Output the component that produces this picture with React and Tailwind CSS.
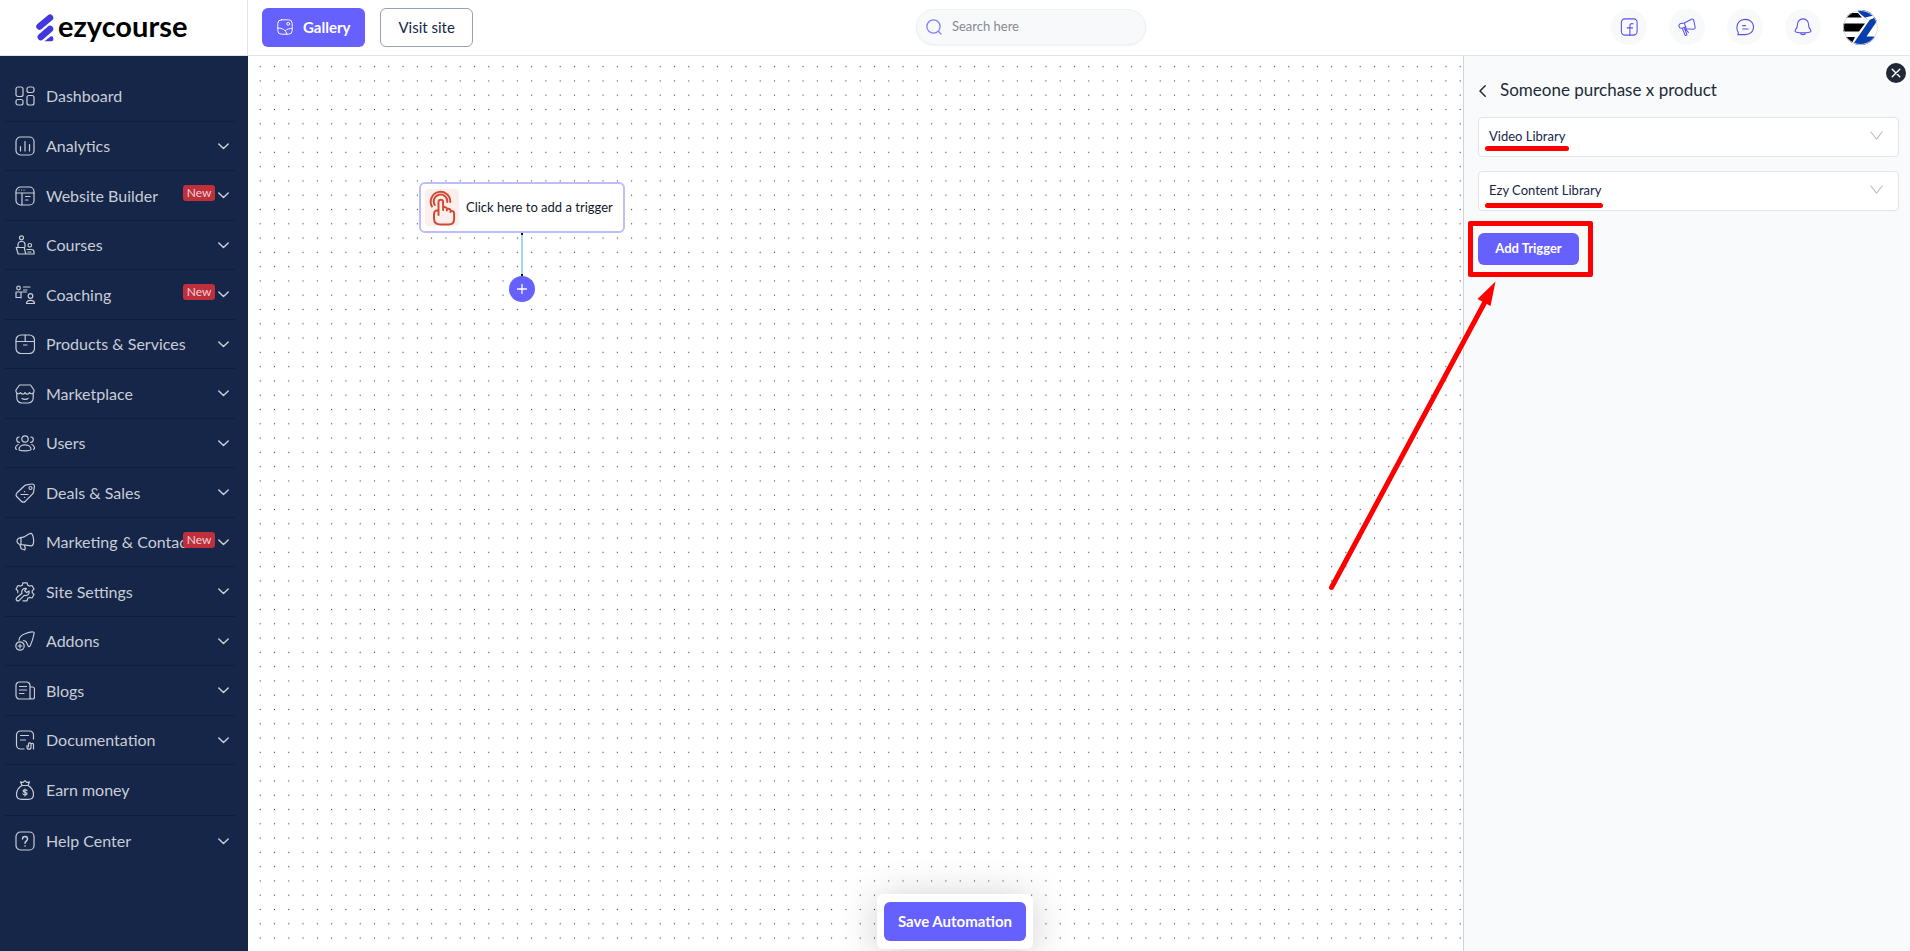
import React from "react";

function Icon({ children, className = "size-5" }) {
  return (
    <svg
      viewBox="0 0 20 20"
      fill="none"
      stroke="currentColor"
      strokeWidth="1.2"
      strokeLinecap="round"
      strokeLinejoin="round"
      className={className + " shrink-0"}
      aria-hidden="true"
    >
      {children}
    </svg>
  );
}

const icons = {
  dashboard: (
    <>
      <rect x="1" y="1" width="7" height="9.5" rx="2" />
      <rect x="12" y="1" width="7" height="5.5" rx="2" />
      <rect x="1" y="13.5" width="7" height="5.5" rx="2" />
      <rect x="12" y="9.5" width="7" height="9.5" rx="2" />
    </>
  ),
  analytics: (
    <>
      <rect x="1" y="1" width="18" height="18" rx="4.5" />
      <path d="M5.5 10.5v4.5M10 5.5v9.5M14.5 8.5v6.5" />
    </>
  ),
  website: (
    <>
      <rect x="1" y="1" width="18" height="18" rx="4.5" />
      <path d="M1 7h18M7 7v12M10.5 10.5h4.5M10.5 14h2.5M4 4h.1M6.5 4h.1M9 4h.1" />
    </>
  ),
  courses: (
    <>
      <circle cx="6.5" cy="2.8" r="2" />
      <circle cx="14.8" cy="10.3" r="1.8" />
      <path d="M3 12V9.5a3 3 0 0 1 3-3h1a3 3 0 0 1 3 3V12M1.2 12.5h8l1.6 6.5H3.2zM12 14.5h4.5a2.5 2.5 0 0 1 2.5 2.5v2H11M13 17h3" />
    </>
  ),
  coaching: (
    <>
      <circle cx="3.5" cy="3" r="1.8" />
      <circle cx="15.5" cy="11" r="2.3" />
      <path d="M8.5 2h6.5M8.5 5h3.5M1 12.5V7h10.5M1 12.5h5M6 7.5v5.500M11.500 18.500c0-2.500 2-3.200 4-3.200s4 .7 4 3.200z" />
    </>
  ),
  products: (
    <>
      <rect x="1" y="1" width="18.5" height="18.5" rx="5" />
      <path d="M1 7.5h18.5M10.2 1v6.5M8.5 11h3.5" />
    </>
  ),
  marketplace: (
    <path d="M1.800 9.500V14a5 5 0 0 0 5 5h6.400a5 5 0 0 0 5-5V9.500M4.500 1h11L19 6v1.500a2.400 2.400 0 0 1-4.500 1 2.400 2.400 0 0 1-4.500 0 2.400 2.400 0 0 1-4.500 0 2.400 2.400 0 0 1-4.500-1V6zM7 14.500c1.500 1.200 4.500 1.200 6 0" />
  ),
  users: (
    <>
      <circle cx="10" cy="6" r="3.2" />
      <path d="M4 16.300c0-3 3-4.500 6-4.500s6 1.500 6 4.500c0 1.200-1.500 1.500-6 1.500s-6-.3-6-1.500zM4.500 9.300A2.600 2.600 0 0 1 4.200 4M15.500 9.300A2.600 2.600 0 0 0 15.800 4M3.200 11.500C.5 12.500-.3 15.800 1.500 16.300M16.800 11.500c2.700 1 3.500 4.300 1.700 4.800" />
    </>
  ),
  deals: (
    <>
      <path d="M11.500 1.800 17 1a2.200 2.200 0 0 1 2.400 2.400l-.8 5.500a4 4 0 0 1-1.200 2.200l-6.900 7.100a3 3 0 0 1-4.200 0l-4.200-4.200a3 3 0 0 1 0-4.200L9.200 3a4 4 0 0 1 2.300-1.200z" />
      <circle cx="15.5" cy="5" r="1.5" />
      <path d="M6 11.500h7M9.500 8.700h.1M9.500 14.300h.1" />
    </>
  ),
  marketing: (
    <path d="M8.500 5.200 14.800 1.600c2-.8 3.200 1 3.700 5.200.5 4.500-.3 7-2.300 7.100L8.500 12.800M8.500 5.200C5 5.500 2 6.500 2 9s3 3.800 6.500 3.800M6 6v6.500M5 13l1.200 3.800 3.600 1.200.5-2-1-2.700" />
  ),
  settings: (
    <>
      <path d="M8 18.800h4l.8-2.500 1.600-.9 2.600.6 2-3.500-1.800-1.900V8.900L19 7l-2-3.500-2.600.6-1.600-.9L12 .8H8l-.8 2.400-1.600.9L3 3.500 1 7l1.800 1.900v1.700" />
      <path d="M1.700 15.800 7 11.300C6 8 8.500 5.800 11.500 6.500L9.700 8.700l2 1.900 2.300-1.700c.7 3-1.700 5.400-4.800 4.400L4 18.600c-2 1-3.700-1-2.300-2.800z" />
    </>
  ),
  addons: (
    <>
      <path d="M4 9.200C4.200 6.500 6.500 4 10 2.700c3-1.200 6-1.900 8-1.700 1.200.1 1.300.8 1 2-.8 4-2 8-3.800 11.700-.7 1.300-1.700 1.200-2.200 0L11 10.500 8.500 9.500" />
      <circle cx="5" cy="15" r="4.2" />
      <path d="M5 13v4M3 15h4" />
    </>
  ),
  blogs: (
    <path d="M15 17.800V4.500A3.500 3.500 0 0 0 11.500 1h-7A3.500 3.500 0 0 0 1 4.500v10A3.500 3.500 0 0 0 4.500 18h13a2 2 0 0 0 2-2V8a2 2 0 0 0-2-2H15M4.500 5.500h7M4.500 9h7M4.500 12.500h4.500M15 16c0 1.300.8 2 2 2" />
  ),
  docs: (
    <path d="M18.500 9V5a4 4 0 0 0-4-4h-9a4 4 0 0 0-4 4v10a4 4 0 0 0 4 4H9M5.500 5.500h8M5.500 10h5M12 15.500v1.700a2 2 0 0 0 4 0v-3.400a1.300 1.300 0 0 0-2.500 0v3M16 14.500c.3-1.500 2.500-1.500 2.500.2V19" />
  ),
  money: (
    <>
      <path d="M7 5.500h6M7 5.500 5.500 1.800l2.300.7L10 .8l2.200 1.700 2.300-.7L13 5.500c3.500 2 5.500 6 5.500 9 0 3.500-2.500 4.800-5 4.800h-7c-2.500 0-5-1.300-5-4.800 0-3 2-7 5.500-9z" />
      <path d="M12 10.700c-.3-1-3.800-1.300-3.800.3 0 1.700 3.900.9 3.900 2.700 0 1.700-3.700 1.500-4.200.2M10 9v7" />
    </>
  ),
  help: (
    <>
      <rect x="1" y="1" width="18" height="18" rx="4.5" />
      <path d="M7.500 8c0-3.500 5-3.500 5 0 0 2-2.500 2.200-2.500 4.200M10 15h.1" strokeWidth="1.5" />
    </>
  ),
};

const menu = [
  { label: "Analytics", icon: "analytics" },
  { label: "Website Builder", icon: "website", isNew: true },
  { label: "Courses", icon: "courses" },
  { label: "Coaching", icon: "coaching", isNew: true },
  { label: "Products & Services", icon: "products" },
  { label: "Marketplace", icon: "marketplace" },
  { label: "Users", icon: "users" },
  { label: "Deals & Sales", icon: "deals" },
  { label: "Marketing & Contacts", icon: "marketing", isNew: true },
  { label: "Site Settings", icon: "settings" },
  { label: "Addons", icon: "addons" },
  { label: "Blogs", icon: "blogs" },
  { label: "Documentation", icon: "docs" },
];

function MenuItem({ label, icon, isNew, chevron = true, className, last }) {
  return (
    <li className={className + (last ? "" : " border-b border-[#0f1d3a]")}>
      <a href="#" className="relative flex h-full items-center gap-[11px] pl-[10px] pr-[6px] text-[#c9cdd5]">
        <Icon>{icons[icon]}</Icon>
        <span className="min-w-0 grow truncate text-base leading-6">{label}</span>
        {isNew && (
          <span className="absolute right-5 top-[14px] h-4 w-8 rounded-[3px] bg-[#c02f3c] text-center text-xs leading-4 text-[#f0d3d6]">
            New
          </span>
        )}
        {chevron && (
          <svg viewBox="0 0 11 7" className="h-[7px] w-[11px] shrink-0" fill="none" stroke="currentColor" strokeWidth="1.5" strokeLinecap="round" strokeLinejoin="round">
            <path d="M.8 1l4.700 4.500L10.200 1" />
          </svg>
        )}
      </a>
    </li>
  );
}

function Sidebar() {
  return (
    <nav className="w-[248px] shrink-0 bg-[#152649] pl-[5px] pr-[13px] pt-[14px]">
      <ul>
        <MenuItem label="Dashboard" icon="dashboard" chevron={false} className="h-[52px]" />
        {menu.map((m) => (
          <MenuItem key={m.label} {...m} className="odd:h-[50px] even:h-[49px]" />
        ))}
        <MenuItem label="Earn money" icon="money" chevron={false} className="h-[51px]" />
        <MenuItem label="Help Center" icon="help" className="h-[50px]" last />
      </ul>
    </nav>
  );
}

function RoundButton({ label, children }) {
  return (
    <button aria-label={label} className="flex size-9 items-center justify-center rounded-full bg-[#f8f9fb] text-[#5b50e6]">
      <Icon className="size-[18px]">{children}</Icon>
    </button>
  );
}

function Header() {
  return (
    <header className="flex h-14 shrink-0 items-stretch border-b border-[#e2e3e6] bg-white">
      <a href="#" className="flex w-[248px] shrink-0 items-center gap-1 border-r border-[#e2e3e6] pl-9 text-black">
        <svg viewBox="0 0 18 28" className="h-7 w-[18px] shrink-0" aria-hidden="true">
          <g stroke="#4338dd" strokeWidth="6.5" strokeLinecap="round">
            <path d="M3.500 12.500 14 3.800" />
            <path d="M4.800 23 14 15" />
          </g>
          <path d="M8.500 27.300 14.500 22.500Q17.300 21.500 17.300 24.500V25.300Q17.300 27.300 15.300 27.300Z" fill="#4338dd" />
        </svg>
        <span className="pb-1 text-[29px] font-bold leading-8">ezycourse</span>
      </a>
      <div className="flex grow items-center pb-px pl-[14px] pr-8">
        <div className="flex gap-[15px]">
          <button className="flex h-[39px] items-center gap-[10px] rounded-md bg-[#6660ff] px-[15px] text-[15px] font-bold text-white">
            <Icon className="size-4">
              <rect x="1" y="1" width="18" height="18" rx="4.5" />
              <circle cx="14" cy="6" r="1.8" />
              <path d="M1 11.500c6-.5 10 2.500 11.500 7.500M10.500 14.500c2-2 5-3 8.500-2.500" />
            </Icon>
            Gallery
          </button>
          <button className="h-[39px] rounded-md border border-[#98a2b3] px-[17px] text-[15px] text-[#152649]">Visit site</button>
        </div>
        <label className="mx-auto flex h-9 w-[230px] items-center gap-[10px] rounded-full border border-[#eff0f3] bg-[#f8f9fb] px-[9px] shadow-xs">
          <svg viewBox="0 0 16 16" className="size-4 shrink-0" fill="none" stroke="#8580fb" strokeWidth="1.3" strokeLinecap="round">
            <circle cx="7.5" cy="7.5" r="6.6" />
            <path d="M12.800 12.800 15 15" />
          </svg>
          <input type="text" aria-label="Search" placeholder="Search here" className="w-full bg-transparent text-[13px] outline-none placeholder:text-[#868b94]" />
        </label>
        <div className="flex items-center gap-[22px] pl-[22px]">
          <RoundButton label="Facebook">
            <rect x="1.5" y="1" width="17.5" height="18" rx="4" />
            <path d="M14.500 6.500c-2.500-.7-3.500.2-3.500 2.500v10M8 11h6" />
          </RoundButton>
          <RoundButton label="Announcements">
            <path d="M7 5.500 15 1.300c1.200-.5 2 0 2.500 1.200l1.500 7.500c.2 1.500-.5 2.300-1.800 2.500L9 12M7 5.500l2 6.500M7 5.500 3 6.200C1 6.800.8 8 1.200 9.500c.5 1.600 1.500 2.200 3.300 1.800L9 10M4.800 11.500l3 7.500c.8.800 2.200.3 2-1l-2.600-6.500M8.500 12.500l3 3.500" />
          </RoundButton>
          <RoundButton label="Messages">
            <path d="M2 18.500c.6-1 .6-2 .3-3A8.300 8.300 0 0 1 1 10.500C1 5.500 4.500 1.500 10.200 1.500S19.500 5.500 19.500 10s-3.500 8.500-9.300 8.500z" />
            <path d="M7.500 8.500h3M7.500 12.200h6" />
          </RoundButton>
          <RoundButton label="Notifications">
            <path d="M10 1C6 1 3.800 4 3.800 7.500c0 3-.6 4-2 5.500-1.300 1.500-.5 2.500 1 2.800 4.400.9 10 .9 14.400 0 1.500-.3 2.300-1.300 1-2.800-1.400-1.500-2-2.500-2-5.500C16.200 4 14 1 10 1zM7 16.500c.5 2.800 5.500 2.800 6 0" />
          </RoundButton>
          <button aria-label="Account" className="size-[35px] overflow-hidden rounded-full">
            <svg viewBox="0 0 35 35" className="size-full">
              <rect width="35" height="35" fill="#fff" />
              <path d="M4 3h11L19 7.500H0zM0 13.500h22L16 21.500H0zM0 27h12L9 33H0z" fill="#000" />
              <path d="M15 0h20v9.500L23.500 26.500H31.500V35H9.500L27 9.500C23 9.500 20 6 15 1.500z" fill="#0b3ead" />
              <path d="M22 7.500 33 5l-3 3.500-4 1.500z" fill="#fff" />
              <circle cx="17.5" cy="17.5" r="17" fill="none" stroke="#d7d9dd" />
            </svg>
          </button>
        </div>
      </div>
    </header>
  );
}

function Canvas() {
  return (
    <section className="relative grow overflow-hidden bg-white">
      <svg className="absolute inset-0 size-full" aria-hidden="true">
        <defs>
          <pattern id="dots" x="5.057" y="3.497" width="14.2857" height="14.2857" patternUnits="userSpaceOnUse">
            <circle cx="7.143" cy="7.143" r="0.6" fill="#3f3f46" />
          </pattern>
        </defs>
        <rect width="100%" height="100%" fill="url(#dots)" />
      </svg>
      <div className="absolute left-[171px] top-[126px] flex flex-col items-center">
        <button className="flex h-[51px] w-[206px] items-center gap-[7px] rounded-md border-2 border-[#bfbdf9] bg-white pl-1 text-[13px] text-[#0f172a]">
          <span className="flex h-[37px] w-[34px] items-center justify-center rounded bg-[#fbeeec] text-[#d34a32]">
            <svg viewBox="-1 -1 28 37" className="h-[37px] w-7" fill="none" stroke="currentColor" strokeWidth="2" strokeLinecap="round" strokeLinejoin="round">
              <path d="M3 16.500A9.800 9.800 0 1 1 21.300 12M5.800 15A6.800 6.800 0 1 1 18.300 12" />
              <path d="M9.500 25V12a2.300 2.300 0 0 1 4.600 0V20M14.100 20v-2.500c2-1 3.800 0 3.800 1.500v1.500M17.900 20.500V19c2-.8 3.600.2 3.600 1.700V22M21.500 21.300c2-.7 3.600.2 3.600 1.900V29c0 3.500-2.200 5.500-5.500 5.500H11.500c-3.800 0-6.500-2-6.500-6v-4.500c0-2.300 1.700-3.700 4.500-3.700" />
            </svg>
          </span>
          Click here to add a trigger
        </button>
        <svg viewBox="0 0 4 43" className="h-[43px] w-1" aria-hidden="true">
          <path d="M2 1v42" stroke="#84c8f2" strokeWidth="1.5" />
          <rect x="1" y="0" width="2" height="2" fill="#111" />
          <rect x="1" y="41" width="2" height="2" fill="#111" />
        </svg>
        <button aria-label="Add step" className="flex size-[26px] items-center justify-center rounded-full bg-[#6660ff] text-white">
          <svg viewBox="0 0 10 10" className="size-[10px]" stroke="currentColor" strokeWidth="1.3" strokeLinecap="round">
            <path d="M5 .5v9M.5 5h9" />
          </svg>
        </button>
      </div>
    </section>
  );
}

function SelectBox({ label, value, children }) {
  return (
    <div className="relative">
      <select aria-label={label} className="block h-10 w-full appearance-none rounded border border-[#e2e4e8] bg-white px-[10px] text-[13px] text-[#152649]">
        <option>{value}</option>
      </select>
      <svg viewBox="0 0 13 9" className="pointer-events-none absolute right-4 top-[14px] h-[9px] w-[13px]" fill="none" stroke="#bfbfbf" strokeWidth="1.2">
        <path d="M.5.5l6 7.500 6-7.500" />
      </svg>
      {children}
    </div>
  );
}

function TriggerPanel() {
  return (
    <aside className="relative w-[447px] shrink-0 border-l border-[#cfd4db] bg-[#f8fafc] pl-[14px] pr-[11px] pt-5">
      <button aria-label="Close" className="absolute right-1 top-[7px] flex size-5 items-center justify-center rounded-full bg-[#212936] text-white">
        <svg viewBox="0 0 10 10" className="size-[10px]" stroke="currentColor" strokeWidth="1.4" strokeLinecap="round">
          <path d="M1.200 1.200l7.600 7.600M8.800 1.200 1.200 8.800" />
        </svg>
      </button>
      <div className="flex items-center gap-[14px]">
        <button aria-label="Back" className="pl-px pt-px text-[#1f2937]">
          <svg viewBox="0 0 7 12" className="h-3 w-[7px]" fill="none" stroke="currentColor" strokeWidth="1.5" strokeLinecap="round" strokeLinejoin="round">
            <path d="M6.200.8 1 6l5.200 5.200" />
          </svg>
        </button>
        <h2 className="text-[17px] leading-7 text-[#222b38]">Someone purchase x product</h2>
      </div>
      <div className="flex flex-col gap-[14px] pt-[13px]">
        <SelectBox label="Product type" value="Video Library">
          <span className="absolute left-[7px] top-[29px] h-[5px] w-[84px] rounded-full bg-[#ff0000]" />
        </SelectBox>
        <SelectBox label="Product" value="Ezy Content Library">
          <span className="absolute left-[7px] top-8 h-[5px] w-[118px] rounded-full bg-[#ff0000]" />
        </SelectBox>
      </div>
      <div className="relative mt-[22px] w-[101px]">
        <button className="h-8 w-full rounded-md bg-[#6660ff] text-[13px] font-bold text-white">Add Trigger</button>
        <span className="pointer-events-none absolute -left-[10px] -top-3 h-14 w-[125px] rounded-xs border-5 border-[#ff0000]" />
        <svg viewBox="0 0 170 312" className="pointer-events-none absolute -left-[150px] top-12 h-[312px] w-[170px]" fill="#f00" aria-hidden="true">
          <path d="M3.500 306.500 158 19" stroke="#f00" strokeWidth="5" strokeLinecap="round" />
          <path d="M167.500.5 162.500 25 149.500 18z" />
        </svg>
      </div>
    </aside>
  );
}

export default function App() {
  return (
    <div className="flex min-h-screen flex-col font-[Lato,'Open_Sans',sans-serif]">
      <Header />
      <main className="flex grow items-stretch">
        <Sidebar />
        <Canvas />
        <TriggerPanel />
      </main>
      <div className="fixed inset-x-0 bottom-[2px] mx-auto w-fit rounded-md bg-white px-[7px] py-2 shadow-[0_4px_40px_rgba(0,0,0,0.2)]">
        <button className="h-[39px] rounded-md bg-[#6660ff] px-[14px] text-[15px] font-bold text-white">Save Automation</button>
      </div>
    </div>
  );
}
